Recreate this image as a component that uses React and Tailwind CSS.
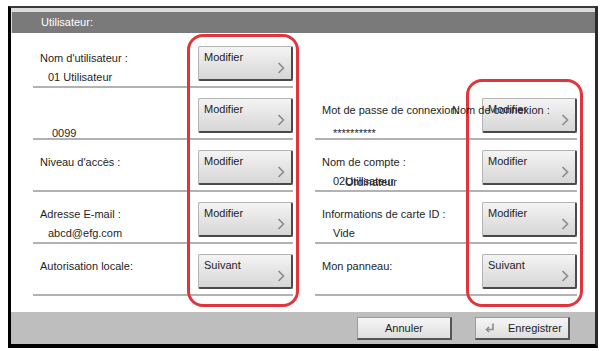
import React from "react";

const Chevron = () => (
  <svg width="8" height="12" viewBox="0 0 8 12" className="absolute right-[6px] bottom-[5px]">
    <polyline points="1.5,1 6.5,6 1.5,11" fill="none" stroke="#8a8a8a" strokeWidth="1.6" />
  </svg>
);

const Btn = ({ label }) => (
  <div className="relative w-[95px] h-[35px] bg-gradient-to-b from-[#f4f4f4] to-[#d6d6d6] border border-[#b4b4b4] border-r-2 border-b-2 border-r-[#4a4a4a] border-b-[#4a4a4a] rounded-[2px]">
    <div className="pl-[5px] pt-[3px] leading-[14px]">{label}</div>
    <Chevron />
  </div>
);

const Row = ({ label, value, btn = "Modifier", overlay, hideBorder, valueIndent = "pl-[8px]" }) => (
  <div className={"relative h-[52px] flex justify-between " + (hideBorder ? "" : "border-b-2 border-[#b2b2b2]")}>
    <div className="pl-[7px] pt-[15px]">
      <div className="h-[14px] leading-[14px] whitespace-nowrap">{label}</div>
      <div className={valueIndent + " mt-[5px] h-[14px] leading-[14px] whitespace-nowrap"}>{value}</div>
    </div>
    {btn && (
      <div className="pt-[10px]">
        <Btn label={btn} />
      </div>
    )}
    {overlay}
  </div>
);

export default function App() {
  return (
    <div
      className="relative w-[601px] h-[351px] bg-white text-[11px] text-[#1e1e1e] overflow-hidden"
      style={{ fontFamily: '"Liberation Sans", Arial, sans-serif' }}
    >
      <div className="ml-[8px] mt-[6px] w-[590px] h-[342px] bg-[#dcdcdc] border-l-[3px] border-l-black border-t-2 border-t-[#3a3a3a] border-r-[3px] border-r-[#2a2a2a] border-b-[4px] border-b-black pt-[4px] flex flex-col">
        {/* Header */}
        <div className="h-[21px] bg-[#7a7a7a] text-white pl-[29px] leading-[21px] ml-[1px]">Utilisateur:</div>

        {/* Content */}
        <div className="h-[279px] bg-white pt-[3px] pl-[22px] flex gap-[22px]">
          <div className="w-[260px] flex flex-col">
            <Row label="Nom d'utilisateur :" value="01 Utilisateur" />
            <Row label="" value="0099" valueIndent="pl-[12px] mt-[9px]" />
            <Row label="Niveau d'accès :" value="" />
            <Row label="Adresse E-mail :" value="abcd@efg.com" />
            <Row label="Autorisation locale:" value="" btn="Suivant" />
          </div>
          <div className="w-[262px] flex flex-col">
            <Row label="" value="" btn={null} hideBorder />
            <Row
              label="Mot de passe de connexion:"
              value="**********"
              valueIndent="pl-[11px] mt-[9px]"
              overlay={
                <div className="absolute left-[137px] top-[15px] leading-[14px] whitespace-nowrap z-10">Nom de connexion :</div>
              }
            />
            <Row
              label="Nom de compte :"
              value={
                <span className="relative">
                  02Utilisateur
                  <span className="absolute left-[12px] top-0">Ordinateur</span>
                </span>
              }
              valueIndent="pl-[11px]"
            />
            <Row label="Informations de carte ID :" value="Vide" valueIndent="pl-[11px]" />
            <Row label="Mon panneau:" value="" btn="Suivant" />
          </div>
        </div>

        {/* Footer */}
        <div className="h-[32px] bg-[#bebebe] flex justify-end gap-[23px] pr-[25px] pt-[5px]">
          <div className="w-[95px] h-[23px] bg-gradient-to-b from-[#f6f6f6] to-[#dedede] border border-[#9a9a9a] border-r-2 border-b-2 border-r-[#555] border-b-[#555] flex items-center justify-center">
            Annuler
          </div>
          <div className="w-[95px] h-[23px] bg-gradient-to-b from-[#f6f6f6] to-[#dedede] border border-[#9a9a9a] border-r-2 border-b-2 border-r-[#555] border-b-[#555] flex items-center pl-[8px] gap-[12px]">
            <svg width="12" height="12" viewBox="0 0 12 12">
              <polyline points="9,1.5 9,7.5 3,7.5" fill="none" stroke="#8c8c8c" strokeWidth="1.6" />
              <polyline points="5,5 2.5,7.5 5,10" fill="none" stroke="#8c8c8c" strokeWidth="1.6" />
            </svg>
            <span>Enregistrer</span>
          </div>
        </div>
      </div>

      {/* Red annotation rings */}
      <div className="absolute left-[187px] top-[34px] w-[112px] h-[273px] border-[3px] border-[#e0353a] rounded-[16px] pointer-events-none" />
      <div className="absolute left-[466px] top-[79px] w-[117px] h-[228px] border-[3px] border-[#e0353a] rounded-[16px] pointer-events-none" />
    </div>
  );
}
